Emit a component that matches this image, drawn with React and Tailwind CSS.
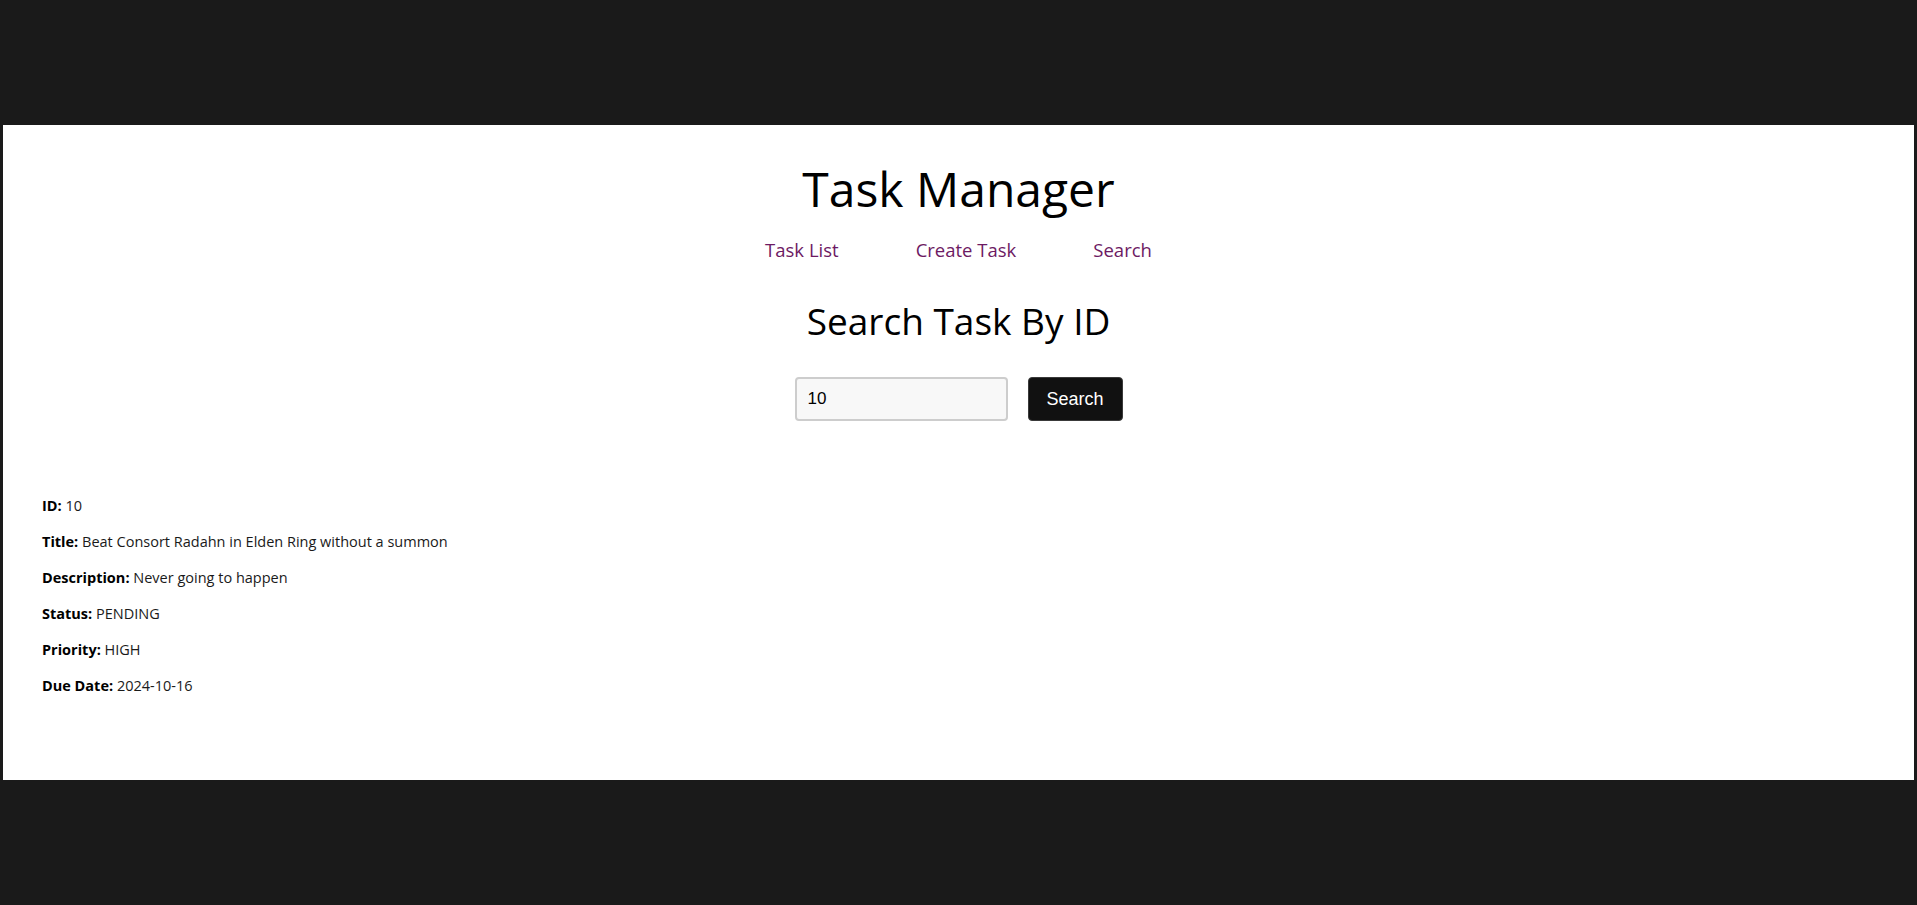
import { useState } from 'react'

const task = {
  id: 10,
  title: 'Beat Consort Radahn in Elden Ring without a summon',
  description: 'Never going to happen',
  status: 'PENDING',
  priority: 'HIGH',
  dueDate: '2024-10-16',
}

export default function App() {
  const [query, setQuery] = useState('10')

  const rows = [
    ['ID', task.id],
    ['Title', task.title],
    ['Description', task.description],
    ['Status', task.status],
    ['Priority', task.priority],
    ['Due Date', task.dueDate],
  ]

  return (
    <div className="min-h-screen bg-[#1a1a1a] pt-[125px] px-[3px]">
      <div className="h-[655px] bg-white font-['Open_Sans',sans-serif] text-black">
        <h1 className="pt-[31px] text-center text-[48px] font-medium leading-[65px]">Task Manager</h1>

        <nav className="mt-[16px] flex justify-center gap-[77px] text-[18.5px] leading-[25px] text-[#6d1a63]">
          <a href="#">Task List</a>
          <a href="#">Create Task</a>
          <a href="#">Search</a>
        </nav>

        <h2 className="mt-[34px] text-center text-[37px] font-medium leading-[50px]">Search Task By ID</h2>

        <div className="mt-[31px] flex justify-center gap-[20px] font-['Liberation_Sans',Arial,sans-serif]">
          <input
            value={query}
            onChange={e => setQuery(e.target.value)}
            className="h-[44px] w-[213px] rounded-[4px] border-2 border-[#cdcdcd] bg-[#f8f8f8] px-[11px] text-[17px] text-black outline-none"
          />
          <button className="h-[44px] w-[95px] rounded-[4px] border border-[#3a3a3a] bg-[#111111] text-[18px] text-white">
            Search
          </button>
        </div>

        <div className="mt-[67px] pl-[39px] text-[14.5px] leading-[36px] text-[#1a1a1a]">
          {rows.map(([label, value]) => (
            <p key={label}>
              <strong className="font-bold text-black">{label}:</strong> {value}
            </p>
          ))}
        </div>
      </div>
    </div>
  )
}
